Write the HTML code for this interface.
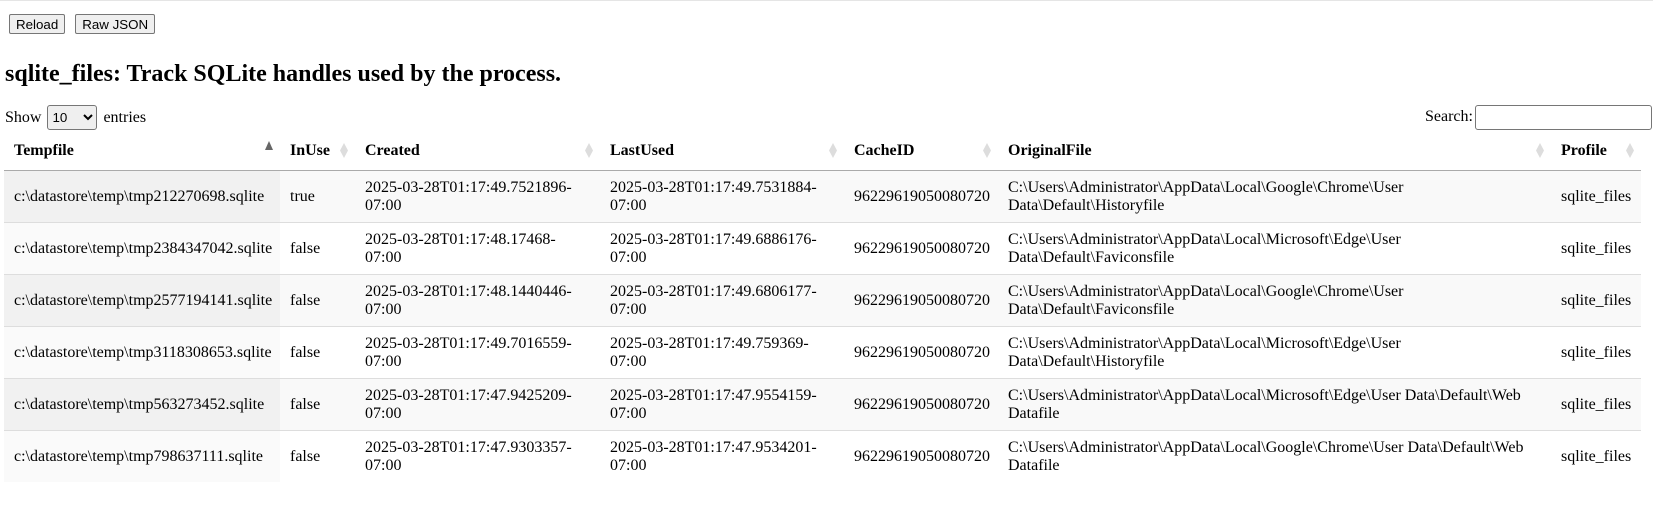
<!DOCTYPE html>
<html><head><style>
body{margin:0;font-family:"Liberation Serif",serif;font-size:16px;color:#000;background:#fff;}
.top{border-top:1px solid #e5e5e5;height:0;}
.btns{position:absolute;top:14px;left:9px;}
button{font-family:"Liberation Sans",sans-serif;font-size:13.33px;padding:1px 6px;border:1px solid #767676;border-radius:2px;background:#efefef;margin-right:10px;height:20px;}
h2{position:absolute;left:5px;top:61px;margin:0;font-size:24px;font-weight:bold;}
.show{position:absolute;left:5px;top:105px;}
select{font-size:13.33px;width:50px;height:25px;border:1px solid #767676;border-radius:3px;margin:0 2px;}
.search{position:absolute;left:1425px;top:105px;}
.search input{width:175px;height:23px;border:1px solid #767676;border-radius:3px;vertical-align:middle;margin-left:2px;padding:0;}
table{position:absolute;left:4px;top:132px;border-collapse:collapse;table-layout:fixed;width:1637px;}
th{text-align:left;padding:0 0 0 10px;height:38px;border-bottom:1px solid #aaa;position:relative;}
th:after{content:"";position:absolute;right:7px;top:11px;width:8px;height:15px;background:#ddd;clip-path:polygon(50% 0,100% 50%,50% 100%,0 50%);}
th.s:after{clip-path:polygon(50% 0,100% 60%,0 60%);background:#666;top:9px;}
td{padding:0 10px 0 10px;height:51px;border-top:1px solid #ddd;}
tr.o td{background:#f9f9f9;}
tr.o td:first-child{background:#f1f1f1;}
tr.e td:first-child{background:#fafafa;}
tr:first-child td{border-top:none;}
</style></head><body>
<div class="top"></div>
<div class="btns"><button>Reload</button><button>Raw JSON</button></div>
<h2>sqlite_files: Track SQLite handles used by the process.</h2>
<div class="show">Show <select><option>10</option></select> entries</div>
<div class="search">Search:<input></div>
<table>
<colgroup><col style="width:276px"><col style="width:75px"><col style="width:245px"><col style="width:244px"><col style="width:154px"><col style="width:553px"><col style="width:90px"></colgroup>
<thead><tr><th class="s">Tempfile</th><th>InUse</th><th>Created</th><th>LastUsed</th><th>CacheID</th><th>OriginalFile</th><th>Profile</th></tr></thead>
<tbody>
<tr class="o"><td>c:\datastore\temp\tmp212270698.sqlite</td><td>true</td><td>2025-03-28T01:17:49.7521896-07:00</td><td>2025-03-28T01:17:49.7531884-07:00</td><td>96229619050080720</td><td>C:\Users\Administrator\AppData\Local\Google\Chrome\User Data\Default\Historyfile</td><td>sqlite_files</td></tr>
<tr class="e"><td>c:\datastore\temp\tmp2384347042.sqlite</td><td>false</td><td>2025-03-28T01:17:48.17468-07:00</td><td>2025-03-28T01:17:49.6886176-07:00</td><td>96229619050080720</td><td>C:\Users\Administrator\AppData\Local\Microsoft\Edge\User Data\Default\Faviconsfile</td><td>sqlite_files</td></tr>
<tr class="o"><td>c:\datastore\temp\tmp2577194141.sqlite</td><td>false</td><td>2025-03-28T01:17:48.1440446-07:00</td><td>2025-03-28T01:17:49.6806177-07:00</td><td>96229619050080720</td><td>C:\Users\Administrator\AppData\Local\Google\Chrome\User Data\Default\Faviconsfile</td><td>sqlite_files</td></tr>
<tr class="e"><td>c:\datastore\temp\tmp3118308653.sqlite</td><td>false</td><td>2025-03-28T01:17:49.7016559-07:00</td><td>2025-03-28T01:17:49.759369-07:00</td><td>96229619050080720</td><td>C:\Users\Administrator\AppData\Local\Microsoft\Edge\User Data\Default\Historyfile</td><td>sqlite_files</td></tr>
<tr class="o"><td>c:\datastore\temp\tmp563273452.sqlite</td><td>false</td><td>2025-03-28T01:17:47.9425209-07:00</td><td>2025-03-28T01:17:47.9554159-07:00</td><td>96229619050080720</td><td>C:\Users\Administrator\AppData\Local\Microsoft\Edge\User Data\Default\Web Datafile</td><td>sqlite_files</td></tr>
<tr class="e"><td>c:\datastore\temp\tmp798637111.sqlite</td><td>false</td><td>2025-03-28T01:17:47.9303357-07:00</td><td>2025-03-28T01:17:47.9534201-07:00</td><td>96229619050080720</td><td>C:\Users\Administrator\AppData\Local\Google\Chrome\User Data\Default\Web Datafile</td><td>sqlite_files</td></tr>
</tbody></table>
</body></html>
